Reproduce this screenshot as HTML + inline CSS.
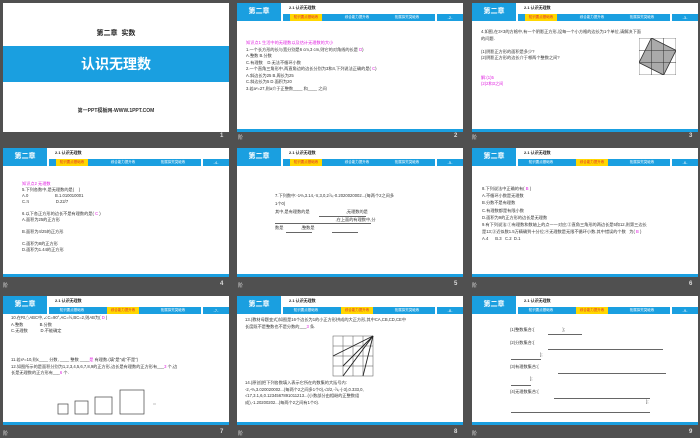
<!DOCTYPE html>
<html><head><meta charset="utf-8"><style>
*{margin:0;padding:0;box-sizing:border-box}
body{width:700px;height:438px;background:#505050;position:relative;overflow:hidden;font-family:"Liberation Sans","Noto Sans CJK SC",sans-serif}
.s{position:absolute;width:226px;height:129px;background:#fff;overflow:hidden}
.s .bot{position:absolute;left:0;right:0;bottom:0;height:3px;background:#1a9fe0}
.blk{position:absolute;left:0;top:0;width:44px;height:18px;background:#1a9fe0;color:#fff;font-size:7px;font-weight:bold;text-align:center;line-height:18px}
.tt{position:absolute;left:52px;top:2px;font-size:4px;font-weight:bold;color:#222}
.bar{position:absolute;left:46px;top:11px;width:152px;height:7px;background:#1a9fe0}
.bar2{position:absolute;left:200px;top:11px;width:26px;height:7px;background:#1a9fe0;color:#fff;font-size:4px;text-align:center;line-height:7px}
.tab{position:absolute;top:11px;height:7px;width:32px;font-size:3.5px;color:#fff;text-align:center;line-height:7px}
.tab.y{background:#ffd700;color:#e03030}
.c{position:absolute;font-size:4.2px;line-height:6.5px;color:#333;white-space:nowrap}
.m{color:#e020e0}
.lab{position:absolute;font-size:6px;color:#ddd;font-weight:bold}
.ln{position:absolute;height:0.7px;background:#666}
</style></head><body>

<!-- slide 1 -->
<div class="s" style="left:3px;top:3px">
<div style="position:absolute;left:0;right:0;top:25px;text-align:center;font-size:7px;font-weight:bold;color:#222">第二章&nbsp;&nbsp;实数</div>
<div style="position:absolute;left:0;right:0;top:43px;height:36px;background:#1a9fe0;color:#fff;text-align:center;font-size:14px;font-weight:bold;line-height:36px">认识无理数</div>
<div style="position:absolute;left:0;right:0;top:104px;text-align:center;font-size:5px;font-weight:bold;color:#333">第一PPT模板网-WWW.1PPT.COM</div>
</div>

<!-- content slides -->
<div class="s" style="left:237px;top:3px"><div class="blk">第二章</div><div class="tt">2.1 认识无理数</div><div class="bar"></div><div class="bar2">-2-</div><div class="tab y" style="left:53px">知识要点基础练</div><div class="tab" style="left:104px">综合能力提升练</div><div class="tab" style="left:154px">拓展探究突破练</div>
<div class="c" style="left:9px;top:37px"><span class="m">知识点1 生活中的无理数以及估计无理数的大小</span><br>1.一个长方形的长与宽分别是6 cm,3 cm,则它的对角线的长是 <span class="m">D</span>)<br>A.整数 B.分数<br>C.有理数&nbsp;&nbsp;&nbsp;&nbsp;D.无法不循环小数<br>2.一个直角三角形中,两直角边的边长分别为3和4,下列说法正确的是( <span class="m">C</span>)<br>A.斜边长为25 B.周长为25<br>C.斜边长为5 D.面积为20<br>3.若a²=27,则a介于正整数____ 和____ 之间</div><div class="bot"></div></div>

<div class="s" style="left:472px;top:3px"><div class="blk">第二章</div><div class="tt">2.1 认识无理数</div><div class="bar"></div><div class="bar2">-3-</div><div class="tab y" style="left:53px">知识要点基础练</div><div class="tab" style="left:104px">综合能力提升练</div><div class="tab" style="left:154px">拓展探究突破练</div>
<div class="c" style="left:9px;top:26px">4.如图,在3×3的方格中,有一个阴影正方形,设每一个小方格的边长为1个单位,请解决下面<br>的问题.<br><br>(1)阴影正方形的面积是多少?<br>(2)阴影正方形的边长介于哪两个整数之间?<br><br><br><span class="m">解:(1)5</span><br><span class="m">(2)2和3之间</span></div>
<svg style="position:absolute;left:167px;top:35px" width="37" height="37" viewBox="0 0 36 36"><polygon points="12,0 36,12 24,36 0,24" fill="#aaa" stroke="#333" stroke-width="0.8"/><g stroke="#333" stroke-width="0.5" fill="none"><rect x="0" y="0" width="36" height="36"/><line x1="12" y1="0" x2="12" y2="36"/><line x1="24" y1="0" x2="24" y2="36"/><line x1="0" y1="12" x2="36" y2="12"/><line x1="0" y1="24" x2="36" y2="24"/></g></svg>
<div class="bot"></div></div>

<div class="s" style="left:3px;top:148px"><div class="blk">第二章</div><div class="tt">2.1 认识无理数</div><div class="bar"></div><div class="bar2">-4-</div><div class="tab y" style="left:53px">知识要点基础练</div><div class="tab" style="left:104px">综合能力提升练</div><div class="tab" style="left:154px">拓展探究突破练</div>
<div class="c" style="left:19px;top:33px;line-height:6px"><span class="m">知识点2 无理数</span><br>5.下列各数中,是无理数的是(&nbsp;&nbsp;&nbsp;&nbsp;)<br>A.0&nbsp;&nbsp;&nbsp;&nbsp;&nbsp;&nbsp;&nbsp;&nbsp;&nbsp;&nbsp;&nbsp;&nbsp;&nbsp;&nbsp;&nbsp;&nbsp;&nbsp;&nbsp;&nbsp;&nbsp;&nbsp;&nbsp;&nbsp;B.1.010010001<br>C.π&nbsp;&nbsp;&nbsp;&nbsp;&nbsp;&nbsp;&nbsp;&nbsp;&nbsp;&nbsp;&nbsp;&nbsp;&nbsp;&nbsp;&nbsp;&nbsp;&nbsp;&nbsp;&nbsp;&nbsp;&nbsp;&nbsp;&nbsp;D.22/7<br><br>6.以下各正方形的边长不是有理数的是( <span class="m">C</span> )<br>A.面积为25的正方形<br><br>B.面积为4/25的正方形<br><br>C.面积为8的正方形<br>D.面积为1.44的正方形</div><div class="bot"></div></div>

<div class="s" style="left:237px;top:148px"><div class="blk">第二章</div><div class="tt">2.1 认识无理数</div><div class="bar"></div><div class="bar2">-5-</div><div class="tab y" style="left:53px">知识要点基础练</div><div class="tab" style="left:104px">综合能力提升练</div><div class="tab" style="left:154px">拓展探究突破练</div>
<div class="c" style="left:38px;top:44px;line-height:8px">7.下列数中:-1⅔,3.14,-π,3,0,2⅞,-0.2020020002...(每两个2之间多<br>1个0)<br>其中,是有理数的是&nbsp;&nbsp;&nbsp;&nbsp;&nbsp;&nbsp;&nbsp;&nbsp;&nbsp;&nbsp;&nbsp;&nbsp;&nbsp;&nbsp;&nbsp;&nbsp;&nbsp;&nbsp;&nbsp;&nbsp;&nbsp;&nbsp;&nbsp;&nbsp;&nbsp;&nbsp;&nbsp;&nbsp;&nbsp;&nbsp;&nbsp;,无理数的是<br>&nbsp;&nbsp;&nbsp;&nbsp;&nbsp;&nbsp;&nbsp;&nbsp;&nbsp;&nbsp;&nbsp;&nbsp;&nbsp;&nbsp;&nbsp;&nbsp;&nbsp;&nbsp;&nbsp;&nbsp;&nbsp;&nbsp;&nbsp;&nbsp;&nbsp;&nbsp;&nbsp;&nbsp;&nbsp;&nbsp;&nbsp;&nbsp;&nbsp;&nbsp;&nbsp;&nbsp;&nbsp;&nbsp;&nbsp;&nbsp;&nbsp;&nbsp;&nbsp;&nbsp;&nbsp;&nbsp;&nbsp;&nbsp;&nbsp;&nbsp;&nbsp;&nbsp;,在上面的有理数中,分<br>数是&nbsp;&nbsp;&nbsp;&nbsp;&nbsp;&nbsp;&nbsp;&nbsp;&nbsp;&nbsp;&nbsp;&nbsp;&nbsp;&nbsp;&nbsp;,整数是</div>
<div class="ln" style="left:82px;top:68px;width:47px"></div><div class="ln" style="left:38px;top:75px;width:96px"></div><div class="ln" style="left:49px;top:84px;width:26px"></div><div class="ln" style="left:95px;top:84px;width:26px"></div>
<div class="bot"></div></div>

<div class="s" style="left:472px;top:148px"><div class="blk">第二章</div><div class="tt">2.1 认识无理数</div><div class="bar"></div><div class="bar2">-6-</div><div class="tab" style="left:53px">知识要点基础练</div><div class="tab y" style="left:104px">综合能力提升练</div><div class="tab" style="left:154px">拓展探究突破练</div>
<div class="c" style="left:10px;top:37px;line-height:7.2px">8.下列说法中正确的有( <span class="m">B</span> )<br>A.不循环小数是无理数<br>B.分数不是有理数<br>C.有理数都是有限小数<br>D.面积为9的正方形的边长是无理数<br>9.有下列说法:①有理数和数轴上的点一一对应;②直角三角形的两边长是5和12,则第三边长<br>是13;③近似数1.5万精确到十分位;④无理数是无限不循环小数.其中错误的个数&nbsp;&nbsp;&nbsp;为( <span class="m">B</span> )<br>A.4&nbsp;&nbsp;&nbsp;&nbsp;&nbsp;&nbsp;B.3&nbsp;&nbsp;&nbsp;C.2&nbsp;&nbsp;D.1</div><div class="bot"></div></div>

<div class="s" style="left:3px;top:296px"><div class="blk">第二章</div><div class="tt">2.1 认识无理数</div><div class="bar"></div><div class="bar2">-7-</div><div class="tab" style="left:53px">知识要点基础练</div><div class="tab y" style="left:104px">综合能力提升练</div><div class="tab" style="left:154px">拓展探究突破练</div>
<div class="c" style="left:8px;top:19px;line-height:6.5px">10.在Rt△ABC中,∠C=90°,AC=½,BC=2,则AB为( <span class="m">D</span> )<br>A.整数&nbsp;&nbsp;&nbsp;&nbsp;&nbsp;&nbsp;&nbsp;&nbsp;&nbsp;&nbsp;&nbsp;&nbsp;&nbsp;&nbsp;B.分数<br>C.无理数&nbsp;&nbsp;&nbsp;&nbsp;&nbsp;&nbsp;&nbsp;&nbsp;&nbsp;&nbsp;&nbsp;D.不能确定</div>
<div class="c" style="left:8px;top:61px;line-height:6.5px">11.若x²=10,则x____ 分数, ____ 整数 ____<span class="m">是</span> 有理数.(填"是"或"不是")<br>12.如图所示的是面积分别为1,2,3,4,5,6,7,8,9的正方形,边长是有理数的正方形有___<span class="m">3</span> 个,边<br>长是无理数的正方形有___<span class="m">6</span> 个.</div>
<svg style="position:absolute;left:50px;top:93px" width="110" height="30"><g fill="none" stroke="#444" stroke-width="0.7"><rect x="5" y="15" width="10" height="10"/><rect x="22" y="12" width="13" height="13"/><rect x="42" y="8" width="17" height="17"/><rect x="67" y="1" width="24" height="24"/></g><line x1="100" y1="15" x2="103" y2="15" stroke="#999" stroke-width="0.6"/></svg>
<div class="bot"></div></div>

<div class="s" style="left:237px;top:296px"><div class="blk">第二章</div><div class="tt">2.1 认识无理数</div><div class="bar"></div><div class="bar2">-8-</div><div class="tab" style="left:53px">知识要点基础练</div><div class="tab y" style="left:104px">综合能力提升练</div><div class="tab" style="left:154px">拓展探究突破练</div>
<div class="c" style="left:8px;top:21px;line-height:6.5px">13.(教材母题变式)如图是16个边长为1的小正方形拼成的大正方形,其中CA,CB,CD,CE中<br>长度既不是整数也不是分数的___<span class="m">3</span> 条.</div>
<svg style="position:absolute;left:92px;top:38px" width="48" height="44" viewBox="0 0 48 44"><g stroke="#555" stroke-width="0.5" fill="none"><rect x="4" y="2" width="40" height="40"/><line x1="14" y1="2" x2="14" y2="42"/><line x1="24" y1="2" x2="24" y2="42"/><line x1="34" y1="2" x2="34" y2="42"/><line x1="4" y1="12" x2="44" y2="12"/><line x1="4" y1="22" x2="44" y2="22"/><line x1="4" y1="32" x2="44" y2="32"/></g><g stroke="#222" stroke-width="0.9"><line x1="44" y1="2" x2="4" y2="22"/><line x1="44" y1="2" x2="14" y2="32"/><line x1="44" y1="2" x2="14" y2="42"/><line x1="44" y1="2" x2="34" y2="42"/></g></svg>
<div class="c" style="left:8px;top:84px;line-height:6.5px">14.(原创)把下列各数填入表示它所在的数集的大括号内:<br>-2,-⅔,3.020020002...(每两个2之间多1个0),√3/2,-⅞,-(-3),0.333,0,<br>√17,3.1,6,0.1234567891011213...(小数部分由相继的正整数组<br>成),-1.20200202...(每两个2之间有1个0).</div>
<div class="bot"></div></div>

<div class="s" style="left:472px;top:296px"><div class="blk">第二章</div><div class="tt">2.1 认识无理数</div><div class="bar"></div><div class="bar2">-9-</div><div class="tab" style="left:53px">知识要点基础练</div><div class="tab y" style="left:104px">综合能力提升练</div><div class="tab" style="left:154px">拓展探究突破练</div>
<div class="c" style="left:38px;top:31px">(1)整数集合:{&nbsp;&nbsp;&nbsp;&nbsp;&nbsp;&nbsp;&nbsp;&nbsp;&nbsp;&nbsp;&nbsp;&nbsp;&nbsp;&nbsp;&nbsp;&nbsp;&nbsp;&nbsp;&nbsp;&nbsp;&nbsp;&nbsp;&nbsp;&nbsp;};</div>
<div class="ln" style="left:76px;top:38px;width:34px"></div>
<div class="c" style="left:38px;top:44px">(2)分数集合:{</div><div class="ln" style="left:76px;top:53px;width:115px"></div><div class="ln" style="left:39px;top:63px;width:30px"></div><div class="c" style="left:68px;top:56px">};</div>
<div class="c" style="left:38px;top:68px">(3)有理数集合:{</div><div class="ln" style="left:86px;top:77px;width:108px"></div><div class="c" style="left:58px;top:80px">};</div><div class="ln" style="left:39px;top:89px;width:20px"></div>
<div class="c" style="left:38px;top:93px">(4)无理数集合:{</div><div class="ln" style="left:82px;top:102px;width:96px"></div><div class="c" style="left:174px;top:103px">};</div><div class="ln" style="left:39px;top:116px;width:139px"></div>
<div class="bot"></div></div>

<!-- labels -->
<div class="lab" style="left:220px;top:133px">1</div><div class="lab" style="left:454px;top:133px">2</div><div class="lab" style="left:689px;top:133px">3</div>
<div class="lab" style="left:220px;top:281px">4</div><div class="lab" style="left:454px;top:281px">5</div><div class="lab" style="left:689px;top:281px">6</div>
<div class="lab" style="left:220px;top:429px">7</div><div class="lab" style="left:454px;top:429px">8</div><div class="lab" style="left:689px;top:429px">9</div>
<div class="lab" style="left:238px;top:134px;font-weight:normal;font-size:5px">阶</div><div class="lab" style="left:472px;top:134px;font-weight:normal;font-size:5px">阶</div>
<div class="lab" style="left:3px;top:282px;font-weight:normal;font-size:5px">阶</div><div class="lab" style="left:238px;top:282px;font-weight:normal;font-size:5px">阶</div><div class="lab" style="left:472px;top:282px;font-weight:normal;font-size:5px">阶</div>
<div class="lab" style="left:3px;top:430px;font-weight:normal;font-size:5px">阶</div><div class="lab" style="left:238px;top:430px;font-weight:normal;font-size:5px">阶</div><div class="lab" style="left:472px;top:430px;font-weight:normal;font-size:5px">阶</div>
</body></html>
